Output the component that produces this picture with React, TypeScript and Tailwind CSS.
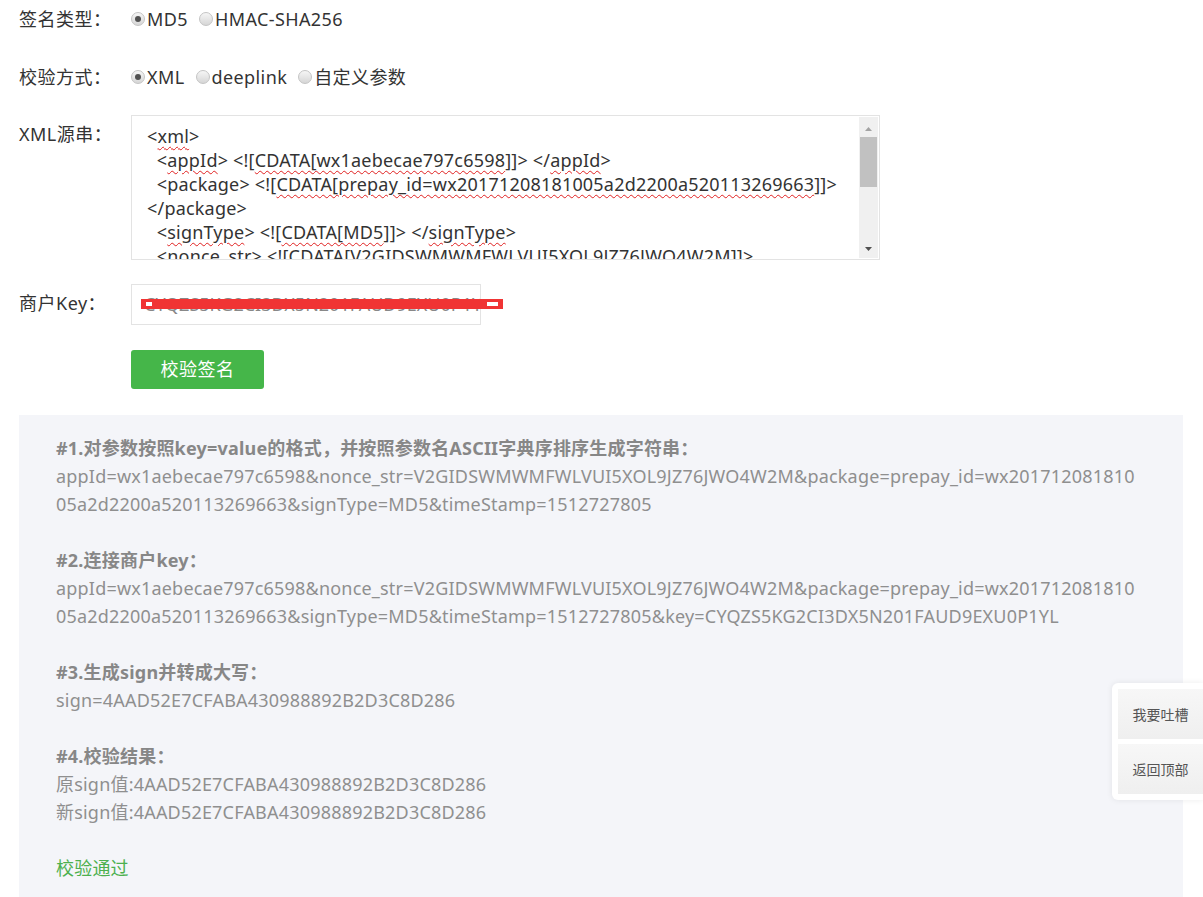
import type { ReactNode } from "react";

const font = { fontFamily: '"Noto Sans", "Noto Sans CJK SC", sans-serif' };

function Radio({ checked, children }: { checked?: boolean; children: ReactNode }) {
  return (
    <span className="mr-[11px] inline-flex items-center">
      <span className="mr-[2px] flex h-[14px] w-[14px] items-center justify-center rounded-full border border-[#c4c4c4] bg-gradient-to-b from-[#f6f6f6] to-[#d6d6d6]">
        {checked && <span className="h-[6px] w-[6px] rounded-full bg-[#505050]" />}
      </span>
      <span className="tracking-[0.4px]">{children}</span>
    </span>
  );
}

function Row({ label, children, className }: { label: string; children: ReactNode; className?: string }) {
  return (
    <div className={`flex ${className ?? ""}`}>
      <div className="w-[112px] shrink-0 leading-[38px] tracking-[0.5px]">{label}</div>
      <div className="flex-1">{children}</div>
    </div>
  );
}

const sq = "underline decoration-wavy decoration-[#e02020] decoration-1 underline-offset-[3px]";

export default function App() {
  const lines = [
    { head: "#1.对参数按照key=value的格式，并按照参数名ASCII字典序排序生成字符串：" },
    { text: "appId=wx1aebecae797c6598&nonce_str=V2GIDSWMWMFWLVUI5XOL9JZ76JWO4W2M&package=prepay_id=wx201712081810" },
    { text: "05a2d2200a520113269663&signType=MD5&timeStamp=1512727805" },
    {},
    { head: "#2.连接商户key：" },
    { text: "appId=wx1aebecae797c6598&nonce_str=V2GIDSWMWMFWLVUI5XOL9JZ76JWO4W2M&package=prepay_id=wx201712081810" },
    { text: "05a2d2200a520113269663&signType=MD5&timeStamp=1512727805&key=CYQZS5KG2CI3DX5N201FAUD9EXU0P1YL" },
    {},
    { head: "#3.生成sign并转成大写：" },
    { text: "sign=4AAD52E7CFABA430988892B2D3C8D286" },
    {},
    { head: "#4.校验结果：" },
    { text: "原sign值:4AAD52E7CFABA430988892B2D3C8D286" },
    { text: "新sign值:4AAD52E7CFABA430988892B2D3C8D286" },
    {},
    { ok: "校验通过" },
  ];

  return (
    <div className="relative h-[897px] overflow-hidden bg-white text-[18px] text-[#333]" style={font}>
      <div className="px-[19px] pt-0">
        <Row label="签名类型：">
          <div className="flex h-[38px] items-center">
            <Radio checked>MD5</Radio>
            <Radio>HMAC-SHA256</Radio>
          </div>
        </Row>
        <Row label="校验方式：" className="mt-[20px]">
          <div className="flex h-[38px] items-center">
            <Radio checked>XML</Radio>
            <Radio>deeplink</Radio>
            <Radio>自定义参数</Radio>
          </div>
        </Row>
        <Row label="XML源串：" className="mt-[19px]">
          <div className="relative h-[145px] w-[749px] overflow-hidden border border-[#e3e3e3] bg-white">
            <div className="whitespace-pre pl-[15px] pt-[8px] leading-[24px] tracking-[0.2px] text-[#333]">
              <div>&lt;<span className={sq}>xml</span>&gt;</div>
              <div>
                {"  "}&lt;<span className={sq}>appId</span>&gt; &lt;![<span className={sq}>CDATA[wx1aebecae797c6598</span>]]&gt; &lt;/<span className={sq}>appId</span>&gt;
              </div>
              <div>
                {"  "}&lt;package&gt; &lt;![<span className={sq}>CDATA[prepay_id=wx20171208181005a2d2200a520113269663</span>]]&gt;
              </div>
              <div>&lt;/package&gt;</div>
              <div>
                {"  "}&lt;<span className={sq}>signType</span>&gt; &lt;![<span className={sq}>CDATA[MD5</span>]]&gt; &lt;/<span className={sq}>signType</span>&gt;
              </div>
              <div>
                {"  "}&lt;<span className={sq}>nonce_str</span>&gt; &lt;![<span className={sq}>CDATA[V2GIDSWMWMFWLVUI5XOL9JZ76JWO4W2M</span>]]&gt;
              </div>
            </div>
            <div className="absolute right-[1px] top-[1px] bottom-[1px] flex w-[19px] flex-col items-center bg-[#f0f0f0]">
              <svg width="9" height="20" viewBox="0 0 9 20">
                <path d="M1 14 L4.5 10 L8 14 Z" fill="#a3a3a3" />
              </svg>
              <div className="h-[50px] w-[17px] bg-[#c1c1c1]" />
              <div className="flex-1" />
              <svg width="9" height="17" viewBox="0 0 9 17">
                <path d="M1 6 L4.5 10 L8 6 Z" fill="#505050" />
              </svg>
            </div>
          </div>
        </Row>
        <Row label="商户Key：" className="mt-[24px]">
          <div className="relative">
            <div className="flex h-[41px] w-[350px] items-center overflow-hidden border border-[#e3e3e3] bg-white pl-[12px] text-[#888] whitespace-nowrap">
              CYQZS5KG2CI3DX5N201FAUD9EXU0P1YL
            </div>
            <div className="absolute left-[10px] top-[15px] flex h-[10px] w-[362px] items-center justify-between bg-[#f03434] px-[5px]">
              <span className="h-[4px] w-[6px] bg-white" />
              <span className="h-[4px] w-[11px] bg-white" />
            </div>
          </div>
        </Row>
        <div className="ml-[112px] mt-[25px]">
          <button className="h-[39px] w-[133px] rounded-[3px] bg-[#45b649] text-[18px] tracking-[0.5px] text-white">校验签名</button>
        </div>
        <div className="mt-[26px] w-[1164px] bg-[#f4f5f9] pb-[20px] pl-[37px] pt-[19px] leading-[28px] tracking-[0.2px] text-[#8f8f8f]">
          {lines.map((l, i) => {
            if (l.head) return <div key={i} className="font-bold text-[#878787]">{l.head}</div>;
            if (l.text) return <div key={i} className="whitespace-nowrap">{l.text}</div>;
            if (l.ok) return <div key={i} className="text-[#4cb04f]">{l.ok}</div>;
            return <div key={i} className="h-[28px]" />;
          })}
        </div>
      </div>

      <div className="absolute right-0 top-[683px] w-[91px] rounded-l-[6px] bg-white py-[6px] pl-[6px] shadow-[0_0_6px_rgba(0,0,0,0.08)]">
        <div className="flex h-[50px] items-center justify-center bg-gradient-to-b from-[#f7f7f7] to-[#efefef] text-[14px] text-[#555]">我要吐槽</div>
        <div className="mt-[5px] flex h-[50px] items-center justify-center bg-gradient-to-b from-[#f7f7f7] to-[#efefef] text-[14px] text-[#555]">返回顶部</div>
      </div>
    </div>
  );
}
